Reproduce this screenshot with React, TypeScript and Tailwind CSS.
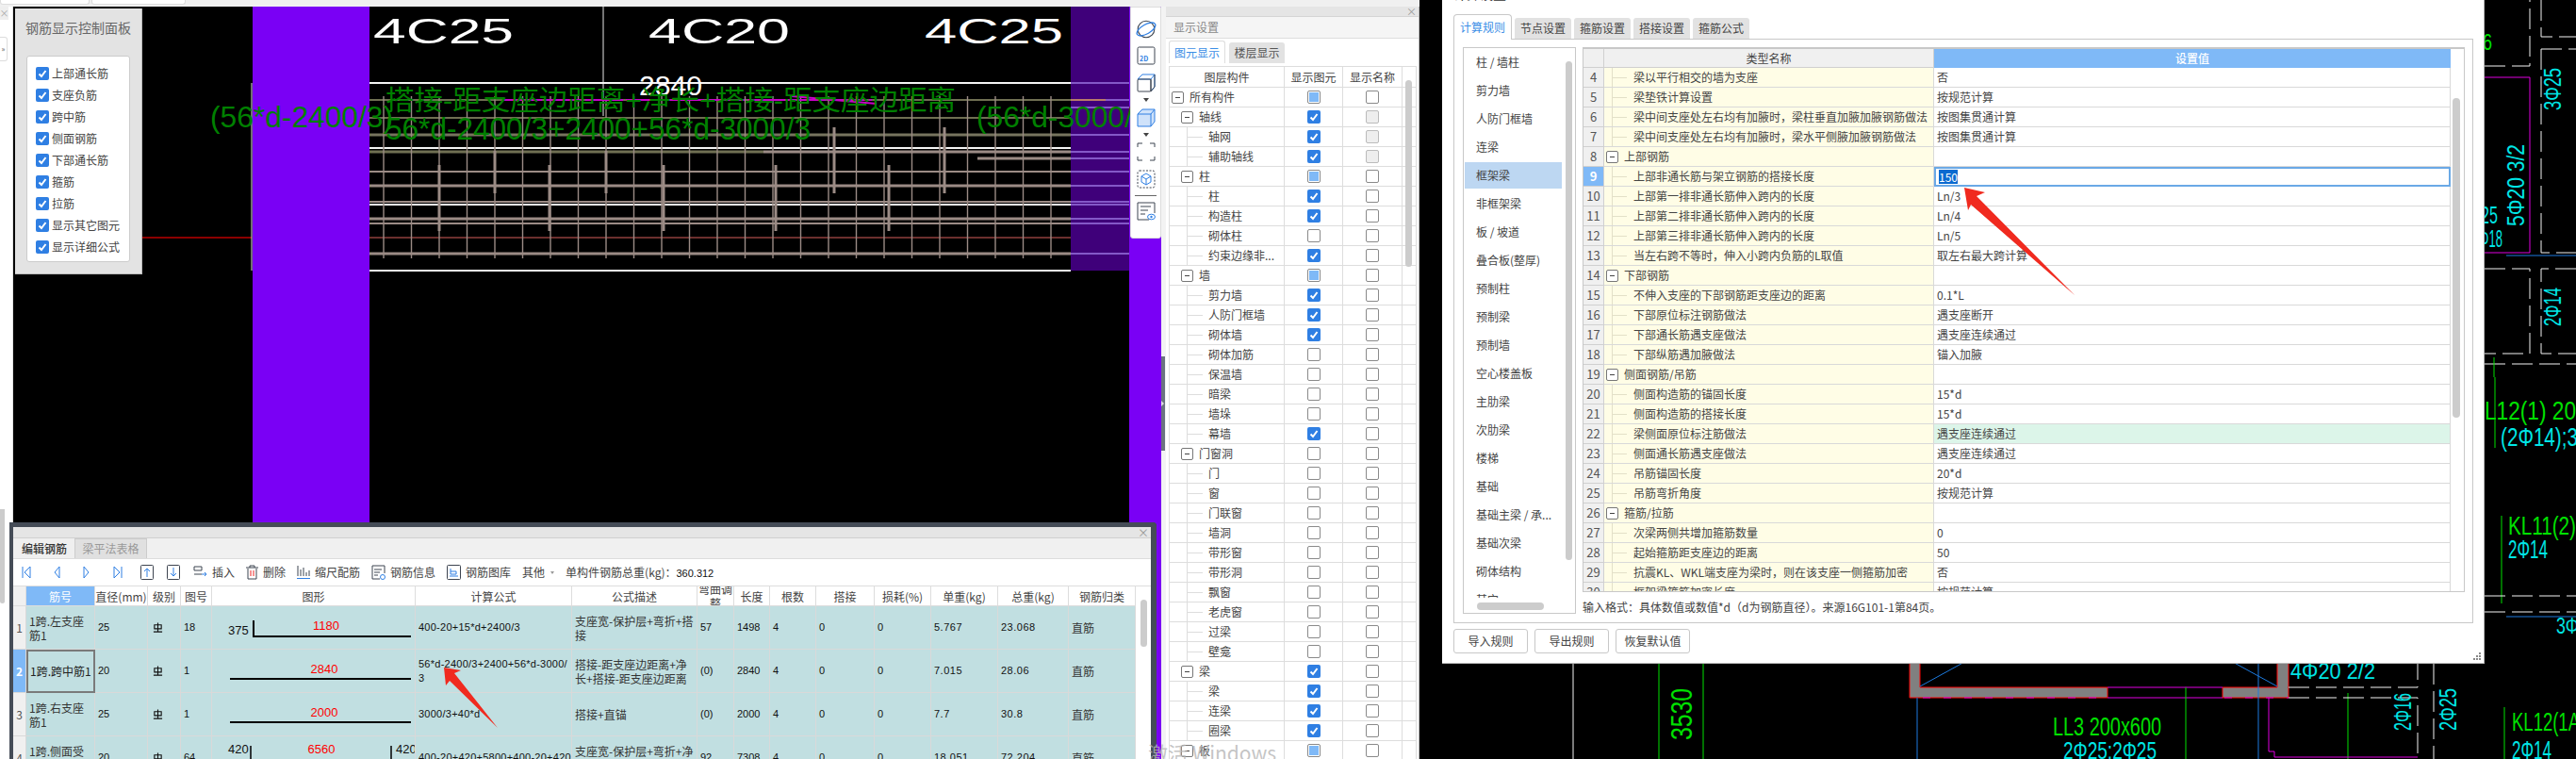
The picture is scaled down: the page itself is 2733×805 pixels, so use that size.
import React from "react";

type CT = { x: number; y: number; w: number; size: number; fill: string; rot?: boolean; children: React.ReactNode };
function T({ x, y, w, size, fill, rot, children }: CT) {
  return (
    <text x={x} y={y} fontSize={size} fill={fill} textLength={w} lengthAdjust="spacingAndGlyphs" transform={rot ? `rotate(-90 ${x} ${y})` : undefined}>
      {children}
    </text>
  );
}

const rebars: [number, number, number, string, number][] = [
  [392, 1136, 106, "#6f6f52", 2],
  [392, 1136, 125, "#6f6f52", 2],
  [392, 1136, 143, "#77745e", 3],
  [392, 810, 161, "#6f6f52", 3],
  [810, 1136, 161, "#9b8b85", 3],
  [1037, 1136, 168, "#9b8b85", 3],
  [392, 1136, 182, "#9b8b85", 2],
  [392, 1136, 197, "#9b8b85", 3],
  [392, 1136, 214, "#9b8b85", 2],
  [392, 1136, 232, "#9b8b85", 3],
  [392, 1136, 237, "#9b8b85", 2],
  [392, 1136, 252, "#9b8b85", 1],
  [392, 1136, 269, "#9b8b85", 3],
];
const streaks = [88, 106, 114, 143, 161, 168, 182, 197, 214, 217, 232, 237, 269];
const thick: [number, number, number][] = [
  [466, 175, 245], [583, 175, 245], [525, 160, 205], [643, 160, 205], [704, 175, 245], [823, 175, 245], [885, 135, 205], [943, 175, 245], [1002, 135, 205],
];

function LeftCad() {
  const verticals = Array.from({ length: 25 }, (_, i) => 407 + i * 29.5);
  return (
    <svg viewBox="14 7 1218 798" className="absolute inset-0 h-full w-full font-['Liberation_Sans','Noto_Sans_CJK_SC',sans-serif]">
      <rect x="14" y="7" width="1218" height="798" fill="#000" />
      <rect x="268" y="7" width="124" height="798" fill="#7a00f5" />
      <rect x="1198" y="7" width="34" height="798" fill="#7a00f5" />
      <rect x="1136" y="7" width="62" height="280" fill="#3f007a" />
      <line x1="151" y1="252" x2="267" y2="252" stroke="#8b0000" strokeWidth="2" />
      <line x1="267" y1="88" x2="267" y2="287" stroke="#e0e0e0" strokeWidth="1" />
      <line x1="640" y1="7" x2="640" y2="123" stroke="#e8e8e8" strokeWidth="1" />
      {[88, 157, 217, 287].map((y) => (
        <line key={y} x1="392" y1={y} x2="1136" y2={y} stroke="#f4f4f4" strokeWidth="2" />
      ))}
      {rebars.map(([a, b, y, c, s], i) => (
        <line key={i} x1={a} y1={y} x2={b} y2={y} stroke={c} strokeWidth={s} />
      ))}
      <line x1="392" y1="252" x2="1136" y2="252" stroke="#8b1a1a" strokeWidth="1" />
      {verticals.map((x) => (
        <line key={x} x1={x} y1="102" x2={x} y2="274" stroke="#9b8b85" strokeWidth="1.4" />
      ))}
      {thick.map(([x, a, b]) => (
        <line key={x} x1={x} y1={a} x2={x} y2={b} stroke="#9b8b85" strokeWidth="3" />
      ))}
      {streaks.map((y) => (
        <line key={y} x1="1136" y1={y} x2="1198" y2={y} stroke="#8458c8" strokeWidth="2" />
      ))}
      <line x1="1136" y1="106" x2="1173" y2="106" stroke="#b87a6a" strokeWidth="2" />
      <line x1="535" y1="106" x2="925" y2="106" stroke="#c800c8" strokeWidth="2" strokeDasharray="40 3" />
      <line x1="840" y1="102" x2="930" y2="110" stroke="#c800c8" strokeWidth="2" />
      <T x={396} y={46} w={149} size={37} fill="#fff">4C25</T>
      <T x={688} y={46} w={150} size={37} fill="#fff">4C20</T>
      <T x={981} y={46} w={147} size={37} fill="#fff">4C25</T>
      <T x={678} y={101} w={67} size={29} fill="#fff">2840</T>
      <T x={409} y={117} w={605} size={29} fill="#008000">搭接-距支座边距离+净长+搭接-距支座边距离</T>
      <T x={409} y={148} w={451} size={34} fill="#008000">56*d-2400/3+2400+56*d-3000/3</T>
      <T x={223} y={135} w={194} size={31} fill="#008000">(56*d-2400/3)</T>
      <T x={1036} y={135} w={194} size={31} fill="#008000">(56*d-3000/3)</T>
    </svg>
  );
}

function Check({ k }: { k: "e" | "c" | "p" | "d" }) {
  if (k === "c")
    return (
      <span className="flex h-[14px] w-[14px] items-center justify-center rounded-[2px] bg-[#2f7fe3]">
        <svg viewBox="0 0 14 14" className="h-[14px] w-[14px]">
          <path d="M3.5 7.5 L6 10 L10.5 4" fill="none" stroke="#fff" strokeWidth="2" />
        </svg>
      </span>
    );
  if (k === "p")
    return (
      <span className="flex h-[14px] w-[14px] items-center justify-center rounded-[2px] border border-[#8a8a8a] bg-white">
        <span className="h-[10px] w-[10px] bg-[#7fb9f7]" />
      </span>
    );
  if (k === "d") return <span className="h-[14px] w-[14px] rounded-[2px] border border-[#bbb] bg-[#eee]" />;
  return <span className="h-[14px] w-[14px] rounded-[2px] border border-[#8a8a8a] bg-white" />;
}

const controls = ["上部通长筋", "支座负筋", "跨中筋", "侧面钢筋", "下部通长筋", "箍筋", "拉筋", "显示其它图元", "显示详细公式"];

function ControlPanel() {
  return (
    <div className="absolute left-[2px] top-[2px] flex h-[282px] w-[135px] flex-col items-center border-b border-r border-[#bbb] bg-[#e3e3e3]">
      <div className="mt-[10px] h-[20px] text-[14px] leading-[20px] text-[#666]">钢筋显示控制面板</div>
      <div className="mt-[20px] flex h-[219px] w-[110px] flex-col rounded-[3px] border border-[#ccc] bg-white pl-[9px] pt-[6px]">
        {controls.map((c) => (
          <div key={c} className="flex h-[23px] items-center gap-[3px] text-[#444]">
            <Check k="c" />
            <span>{c}</span>
          </div>
        ))}
      </div>
    </div>
  );
}

function ToolBar() {
  const s = "#3d4450";
  const b = "#2f7fe3";
  return (
    <div className="absolute right-0 top-0 flex h-[246px] w-[33px] flex-col items-center rounded-b-[3px] border border-[#ddd] bg-white pt-[12px]">
      <svg viewBox="0 0 20 20" className="h-[22px] w-[22px]">
        <circle cx="10" cy="10" r="8" fill="none" stroke={s} strokeWidth="1" />
        <ellipse cx="10" cy="10" rx="10" ry="4.5" transform="rotate(-30 10 10)" fill="none" stroke={b} strokeWidth="1.2" />
      </svg>
      <svg viewBox="0 0 20 20" className="mt-[7px] h-[20px] w-[20px]">
        <rect x="1" y="1" width="18" height="18" rx="1.5" fill="none" stroke={s} />
        <text x="3" y="16" fontSize="7" fontWeight="700" fill={b}>2D</text>
      </svg>
      <svg viewBox="0 0 20 20" className="mt-[9px] h-[20px] w-[20px]">
        <path d="M1 6 L6 1 H19 V14 L15 19" fill="none" stroke={b} />
        <path d="M1 6 H15 L19 1" fill="none" stroke={b} />
        <rect x="1" y="6" width="14" height="13" rx="1" fill="none" stroke={s} />
        <path d="M15 6 V19 L19 14 V1" fill="none" stroke={s} />
      </svg>
      <div className="mt-[6px] h-0 w-0 border-x-[3px] border-t-[4px] border-x-transparent border-t-[#444]" />
      <svg viewBox="0 0 20 20" className="mt-[7px] h-[20px] w-[20px]">
        <path d="M1 6 L6 1 H19 V14 L15 19 H1 Z" fill="#cfe2fa" stroke={b} />
        <path d="M1 6 H15 V19 M15 6 L19 1" fill="none" stroke={b} />
      </svg>
      <div className="mt-[6px] h-0 w-0 border-x-[3px] border-t-[4px] border-x-transparent border-t-[#444]" />
      <svg viewBox="0 0 20 20" className="mt-[6px] h-[20px] w-[20px]">
        <path d="M1 5 V1 H6 M14 1 H19 V5 M19 15 V19 H14 M6 19 H1 V15" fill="none" stroke={s} />
      </svg>
      <svg viewBox="0 0 20 20" className="mt-[9px] h-[20px] w-[20px]">
        <rect x="1" y="1" width="18" height="18" rx="2" fill="none" stroke={s} strokeDasharray="2 1.5" />
        <path d="M10 4 L15 7 V13 L10 16 L5 13 V7 Z M5 7 L10 10 L15 7 M10 10 V16" fill="none" stroke={b} />
      </svg>
      <div className="mt-[7px] h-px w-[23px] bg-[#666]" />
      <svg viewBox="0 0 20 20" className="mt-[6px] h-[20px] w-[20px]">
        <path d="M13 19 H1 V1 H19 V12" fill="none" stroke={s} />
        <path d="M4 5 H15 M4 9 H12 M4 13 H9" stroke={s} />
        <ellipse cx="15.5" cy="16" rx="4" ry="2.8" fill="none" stroke={b} />
        <circle cx="15.5" cy="16" r="1.2" fill={b} />
      </svg>
    </div>
  );
}

const layers: [number, string, "e" | "c" | "p", ("e" | "d")?][] = [
  [0, "所有构件", "p"], [1, "轴线", "c", "d"], [2, "轴网", "c", "d"], [2, "辅助轴线", "c", "d"], [1, "柱", "p"], [2, "柱", "c"], [2, "构造柱", "c"], [2, "砌体柱", "e"],
  [2, "约束边缘非...", "c"], [1, "墙", "p"], [2, "剪力墙", "c"], [2, "人防门框墙", "c"], [2, "砌体墙", "c"], [2, "砌体加筋", "e"], [2, "保温墙", "e"], [2, "暗梁", "e"],
  [2, "墙垛", "e"], [2, "幕墙", "c"], [1, "门窗洞", "e"], [2, "门", "e"], [2, "窗", "e"], [2, "门联窗", "e"], [2, "墙洞", "e"], [2, "带形窗", "e"], [2, "带形洞", "e"],
  [2, "飘窗", "e"], [2, "老虎窗", "e"], [2, "过梁", "e"], [2, "壁龛", "e"], [1, "梁", "c"], [2, "梁", "c"], [2, "连梁", "c"], [2, "圈梁", "c"], [1, "板", "p"],
];

function Minus() {
  return (
    <span className="flex h-[13px] w-[13px] shrink-0 items-center justify-center rounded-[2px] border border-[#777] bg-white">
      <span className="h-px w-[5px] bg-[#444]" />
    </span>
  );
}

function DisplayPanel() {
  return (
    <div className="relative flex h-full w-[269px] flex-col overflow-hidden border-r border-[#bbb] bg-white">
      <div className="flex h-[11px] shrink-0 items-center justify-end border-b border-[#d5d5d5] bg-[#e5e5e5] pr-[2px] text-[11px] leading-none text-[#999]">×</div>
      <div className="flex h-[23px] shrink-0 items-center border-b border-[#ddd] bg-[#f5f5f5] pl-[8px] text-[#888]">显示设置</div>
      <div className="flex h-[26px] shrink-0 items-end gap-[4px] pl-[3px]">
        <div className="flex h-[24px] w-[60px] items-center justify-center rounded-t-[3px] border border-b-0 border-[#ddd] text-[#3a8ee6]">图元显示</div>
        <div className="flex h-[22px] w-[59px] items-center justify-center rounded-t-[3px] bg-[#e2e2e2] text-[#555]">楼层显示</div>
      </div>
      <div className="ml-[3px] mt-[3px] w-[263px] border-l border-r border-t border-[#ddd]">
        <div className="grid h-[22px] grid-cols-[122px_62px_63px] border-b border-[#ddd] text-center leading-[21px] text-[#444]">
          <div className="border-r border-[#ddd]">图层构件</div>
          <div className="border-r border-[#ddd]">显示图元</div>
          <div className="border-r border-[#ddd]">显示名称</div>
        </div>
        {layers.map(([lv, name, a, b], i) => (
          <div key={i} className="grid h-[21px] grid-cols-[122px_62px_63px] border-b border-[#ddd] text-[#444]">
            <div className="flex h-full items-center border-r border-[#ddd]">
              {lv === 0 && (
                <span className="flex items-center gap-[6px] pl-[2px]">
                  <Minus />
                  {name}
                </span>
              )}
              {lv === 1 && (
                <span className="flex items-center gap-[6px] pl-[12px]">
                  <Minus />
                  {name}
                </span>
              )}
              {lv === 2 && (
                <>
                  <span className="ml-[18px] flex h-full w-[17px] items-center border-l border-[#ddd]">
                    <span className="w-full border-t border-[#ddd]" />
                  </span>
                  <span className="ml-[6px] whitespace-nowrap">{name}</span>
                </>
              )}
            </div>
            <div className="flex items-center justify-center border-r border-[#ddd]">
              <Check k={a} />
            </div>
            <div className="flex items-center justify-center border-r border-[#ddd]">
              <Check k={b ?? "e"} />
            </div>
          </div>
        ))}
      </div>
      <div className="absolute left-[254px] top-[78px] h-[198px] w-[7px] rounded-full bg-[#ccc]" />
    </div>
  );
}

const COLS = "grid-cols-[14px_73px_56px_35px_33px_216px_166px_133px_39px_38px_49px_62px_60px_71px_75px_71px]";
const heads = ["", "筋号", "直径(mm)", "级别", "图号", "图形", "计算公式", "公式描述", "弯曲调整", "长度", "根数", "搭接", "损耗(%)", "单重(kg)", "总重(kg)", "钢筋归类"];
const rows = [
  { n: "1跨.左支座筋1", d: "25", t: "18", f: "400-20+15*d+2400/3", m: "支座宽-保护层+弯折+搭接", w: "57", l: "1498", u: "5.767", tw: "23.068" },
  { n: "1跨.跨中筋1", d: "20", t: "1", f: "56*d-2400/3+2400+56*d-3000/3", m: "搭接-距支座边距离+净长+搭接-距支座边距离", w: "(0)", l: "2840", u: "7.015", tw: "28.06" },
  { n: "1跨.右支座筋1", d: "25", t: "1", f: "3000/3+40*d", m: "搭接+直锚", w: "(0)", l: "2000", u: "7.7", tw: "30.8" },
  { n: "1跨.侧面受扭筋1", d: "20", t: "64", f: "400-20+420+5800+400-20+420", m: "支座宽-保护层+弯折+净长+支座宽-保护层+弯折", w: "92", l: "7308", u: "18.051", tw: "72.204" },
];

function Shape({ i }: { i: number }) {
  const labels = ["1180", "2840", "2000", "6560"];
  return (
    <svg viewBox="0 0 216 46" className="h-[46px] w-[216px] font-['Liberation_Sans',sans-serif]">
      {i === 0 && (
        <>
          <text x="17" y="30" fontSize="13" fill="#111">375</text>
          <path d="M44 15 V32 H211" fill="none" stroke="#000" strokeWidth="2" />
        </>
      )}
      {(i === 1 || i === 2) && <line x1="19" y1="31" x2="211" y2="31" stroke="#000" strokeWidth="2" />}
      {i === 3 && (
        <>
          <text x="17" y="18" fontSize="13" fill="#111">420</text>
          <path d="M41 10 V32 H190 V10" fill="none" stroke="#000" strokeWidth="1.5" />
          <text x="195" y="18" fontSize="13" fill="#111">420</text>
        </>
      )}
      <text x={i === 0 ? 121 : i === 3 ? 116 : 119} y={i === 3 ? 18 : 25} fontSize="13" fill="#f00" textAnchor="middle">{labels[i]}</text>
    </svg>
  );
}

function Grade() {
  return (
    <svg viewBox="0 0 12 12" className="h-[11px] w-[11px]">
      <path d="M2 3 H10 V7.5 H2 Z M6 0.5 V11 M1 11 H11" fill="none" stroke="#111" strokeWidth="1.2" />
    </svg>
  );
}

function Tool({ label, children }: { label: string; children: React.ReactNode }) {
  return (
    <div className="flex items-center gap-[5px] text-[#444]">
      {children}
      <span>{label}</span>
    </div>
  );
}

function Dialog() {
  const bl = "#2f7fe3";
  const dk = "#3d4450";
  const num = "font-['Liberation_Sans',sans-serif] text-[11px] text-[#111]";
  return (
    <div className="absolute left-[10px] top-[554px] flex h-[260px] w-[1217px] flex-col overflow-hidden rounded-tr-[4px] border-b-0 border-l-[4px] border-r-[6px] border-t-[5px] border-[#454c57] bg-white">
      <div className="flex h-[12px] shrink-0 items-center justify-end border-b border-[#d0d0d0] bg-[#e5e5e5] pr-[2px] text-[12px] leading-none text-[#999]">×</div>
      <div className="flex h-[22px] shrink-0 items-stretch border-b border-[#ddd] bg-[#f0f0f0] pl-px">
        <div className="flex w-[64px] items-center justify-center bg-[#efefef] font-medium text-[#333]">编辑钢筋</div>
        <div className="flex w-[77px] items-center justify-center border border-b-0 border-[#ccc] bg-[#e0e0e0] text-[#999]">梁平法表格</div>
      </div>
      <div className="flex h-[29px] shrink-0 items-center border-b border-[#ddd] bg-white pl-[9px]">
        <svg width="10" height="14" viewBox="0 0 10 14" className="mr-[24px]"><path d="M1 1 V13 M9 1 V13 L3 7 Z" fill="none" stroke={bl} /></svg>
        <svg width="7" height="14" viewBox="0 0 7 14" className="mr-[24px]"><path d="M6 1 V13 L1 7 Z" fill="none" stroke={bl} /></svg>
        <svg width="7" height="14" viewBox="0 0 7 14" className="mr-[25px]"><path d="M1 1 V13 L6 7 Z" fill="none" stroke={bl} /></svg>
        <svg width="10" height="14" viewBox="0 0 10 14" className="mr-[19px]"><path d="M1 1 V13 L7 7 Z M9 1 V13" fill="none" stroke={bl} /></svg>
        <svg width="14" height="16" viewBox="0 0 14 16" className="mr-[14px]"><rect x=".5" y=".5" width="13" height="15" rx="1" fill="none" stroke={dk} /><path d="M7 13 V4 M4 7 L7 4 L10 7" fill="none" stroke={bl} /></svg>
        <svg width="14" height="16" viewBox="0 0 14 16" className="mr-[14px]"><rect x=".5" y=".5" width="13" height="15" rx="1" fill="none" stroke={dk} /><path d="M7 3 V12 M4 9 L7 12 L10 9" fill="none" stroke={bl} /></svg>
        <div className="flex items-center gap-[12px]">
          <Tool label="插入">
            <svg width="15" height="14" viewBox="0 0 15 14"><path d="M1 1 H9 V5 H1 Z M1 9 H9" fill="none" stroke={dk} /><path d="M9 9 H14 M12 7 L14 9 L12 11" fill="none" stroke={bl} /></svg>
          </Tool>
          <Tool label="删除">
            <svg width="13" height="16" viewBox="0 0 13 16"><path d="M2 4 V15 H11 V4 M0 3 H13 M4 3 V1 H9 V3" fill="none" stroke={dk} /><path d="M5 6 V12 M8 6 V12" stroke="#e22" /></svg>
          </Tool>
          <Tool label="缩尺配筋">
            <svg width="14" height="16" viewBox="0 0 14 16"><path d="M1 1 V12 M4 5 V12 M7 3 V12 M10 8 V12 M13 6 V12" stroke={dk} /><path d="M0 14.5 H14" stroke={bl} /></svg>
          </Tool>
          <Tool label="钢筋信息">
            <svg width="15" height="16" viewBox="0 0 15 16"><path d="M9 15 H1 V1 H14 V9" fill="none" stroke={dk} /><path d="M3 5 H11 M3 8 H9 M3 11 H7" stroke={dk} /><circle cx="12" cy="13" r="2.5" fill="none" stroke={bl} /></svg>
          </Tool>
          <Tool label="钢筋图库">
            <svg width="15" height="16" viewBox="0 0 15 16"><rect x=".5" y=".5" width="14" height="15" rx="1" fill="none" stroke={dk} /><path d="M4 4 V10 H10 V7 H4 M3 12 H12" fill="none" stroke={bl} /></svg>
          </Tool>
          <div className="flex items-center gap-[6px] text-[#444]">
            <span>其他</span>
            <span className="h-0 w-0 border-x-[2px] border-t-[3px] border-x-transparent border-t-[#999]" />
          </div>
          <span className="whitespace-nowrap text-[#444]">
            单构件钢筋总重(kg)：<span className={num}>360.312</span>
          </span>
        </div>
      </div>
      <div className={`grid h-[21px] w-[1191px] shrink-0 border-b border-[#ddd] bg-white pl-0 text-center text-[#444] ${COLS}`}>
        {heads.map((h, i) => (
          <div key={i} className={`flex items-center justify-center overflow-hidden border-r border-[#ddd] leading-[15px] ${i === 0 ? "bg-[#f0f0f0]" : ""} ${i === 1 ? "bg-[#7fb9f7] text-white" : ""}`}>
            {h}
          </div>
        ))}
      </div>
      {rows.map((r, i) => {
        const cell = "flex h-[46px] items-center border-b border-r border-[#d9d9d9] bg-[#c1dfe1] pl-[3px]";
        return (
          <div key={i} className={`grid w-[1191px] shrink-0 ${COLS}`}>
            <div className={`flex h-[46px] items-center justify-center border-b border-r border-[#d9d9d9] ${i === 1 ? "bg-[#7fb9f7] font-bold text-white" : "bg-[#f0f0f0] text-[#555]"}`}>{i + 1}</div>
            <div className={i === 1 ? "flex h-[46px] items-center border-2 border-[#7a7a7a] bg-[#c1dfe1] pl-[2px] text-[#222]" : `${cell} leading-[15px] text-[#333]`}>
              <span className="whitespace-pre-wrap break-all">{r.n}</span>
            </div>
            <div className={`${cell} ${num}`}>{r.d}</div>
            <div className={`${cell} pl-[5px]`}><Grade /></div>
            <div className={`${cell} ${num}`}>{r.t}</div>
            <div className="h-[46px] overflow-hidden border-b border-r border-[#d9d9d9] bg-[#c1dfe1]"><Shape i={i} /></div>
            <div className={`${cell} leading-[15px] ${num}`}>
              <span className="break-all tracking-[0.25px]">{r.f}</span>
            </div>
            <div className={`${cell} leading-[15px] text-[#333]`}>{r.m}</div>
            <div className={`${cell} ${num}`}>{r.w}</div>
            <div className={`${cell} ${num}`}>{r.l}</div>
            <div className={`${cell} ${num}`}>4</div>
            <div className={`${cell} ${num}`}>0</div>
            <div className={`${cell} ${num}`}>0</div>
            <div className={`${cell} ${num} tracking-[0.5px]`}>{r.u}</div>
            <div className={`${cell} ${num} tracking-[0.5px]`}>{r.tw}</div>
            <div className={`${cell} text-[#333]`}>直筋</div>
          </div>
        );
      })}
      <div className="absolute left-[1196px] top-[77px] h-[50px] w-[7px] rounded-full bg-[#ccc]" />
    </div>
  );
}

function LeftApp() {
  return (
    <div className="relative flex h-full w-[1506px] shrink-0 flex-col bg-[#f0f0f0]">
      <div className="flex h-[7px] shrink-0 items-start gap-[2px]">
        <div className="h-[5px] w-[95px] rounded-b-[3px] border border-t-0 border-[#ddd] bg-white" />
        <div className="h-[5px] w-[100px] rounded-b-[3px] border border-t-0 border-[#ddd] bg-white" />
      </div>
      <div className="flex h-[798px] min-h-0">
        <div className="flex w-[14px] shrink-0 flex-col border-r border-[#e0e0e0] bg-white">
          <div className="flex h-[14px] w-[9px] items-center justify-center bg-[#eee] text-[10px] leading-none text-[#aaa]">×</div>
          <div className="mt-[18px] flex h-[26px] w-[8px] items-center justify-center rounded-r-[3px] border border-l-0 border-[#ddd] text-[8px] leading-none text-[#555]">»</div>
        </div>
        <div className="relative w-[1218px] shrink-0 overflow-hidden">
          <LeftCad />
          <ControlPanel />
          <ToolBar />
        </div>
        <div className="flex w-[5px] shrink-0 flex-col bg-[#f3f3f3]">
          <div className="mt-[371px] flex h-[100px] w-[4px] items-center bg-[#6b7280]">
            <span className="h-0 w-0 border-y-[3px] border-l-[3px] border-y-transparent border-l-[#ddd]" />
          </div>
        </div>
        <DisplayPanel />
      </div>
      <Dialog />
      <div className="absolute left-0 top-[540px] h-[100px] w-[5px] rounded-b-[3px] bg-[#ccc]" />
      <svg viewBox="10 554 1217 251" className="pointer-events-none absolute left-[10px] top-[554px] h-[251px] w-[1217px]">
        <polygon points="471,708 489,711 482,714 528,772 477,722 473,727" fill="#f02a1f" />
      </svg>
    </div>
  );
}

function RightCad() {
  const c = "#00e5e5";
  const g = "#00e000";
  const m = "#e000e0";
  const b = "#1c7be0";
  const w = "#f4f4f4";
  const dash = "22 7";
  return (
    <svg viewBox="1506 0 1227 805" className="absolute inset-0 h-full w-full font-['Liberation_Sans',sans-serif]">
      <rect x="1506" y="0" width="1227" height="805" fill="#000" />
      <line x1="1669" y1="700" x2="1669" y2="805" stroke={w} />
      <line x1="1760" y1="700" x2="1760" y2="805" stroke={g} />
      <line x1="1807" y1="700" x2="1807" y2="805" stroke={g} />
      <T x={1795} y={785} w={55} size={32} fill={g} rot>3530</T>
      <path d="M2026 700 V740 H2236 V729 H2037 V700 Z" fill="#808080" stroke="#f00" />
      <path d="M2428 700 V740 H2358 V729 H2416 V700 Z" fill="#808080" stroke="#f00" />
      <path d="M2236 729 H2358 M2236 740 H2358" stroke={m} />
      <path d="M2040 740 H2236 M2360 740 H2428" stroke={m} strokeDasharray="8 14" />
      <path d="M2037 728 L2088 700 M2416 728 L2365 700" stroke={b} />
      <path d="M2034 740 V805 M2396 700 V805" stroke={b} />
      <path d="M2319 729 V805 M2491 735 V805" stroke={g} />
      <path d="M2407 740 V797 H2413 V803 H2565" fill="none" stroke={m} />
      <T x={2178} y={780} w={115} size={28} fill={g}>LL3 200x600</T>
      <T x={2189} y={805} w={99} size={26} fill={c}>2Φ25;2Φ25</T>
      <T x={2430} y={720} w={90} size={24} fill={c}>4Φ20 2/2</T>
      <path d="M2428 729 H2565 V704 M2428 740 H2565 V805 M2582 704 V805" fill="none" stroke={w} strokeDasharray={dash} />
      <T x={2558} y={775} w={40} size={26} fill={c} rot>2Φ16</T>
      <T x={2606} y={775} w={45} size={26} fill={c} rot>2Φ25</T>
      <T x={2636} y={445} w={97} size={28} fill={g}>L12(1) 20</T>
      <T x={2653} y={473} w={82} size={28} fill={c}>(2Φ14);3</T>
      <line x1="2647" y1="400" x2="2647" y2="475" stroke={g} />
      <T x={2661} y={567} w={72} size={28} fill={g}>KL11(2)</T>
      <T x={2661} y={592} w={42} size={28} fill={c}>2Φ14</T>
      <line x1="2654" y1="547" x2="2654" y2="640" stroke={g} />
      <path d="M2636 632 H2733 M2636 649 H2733" stroke={w} strokeDasharray={dash} />
      <line x1="2659" y1="654" x2="2733" y2="654" stroke={b} />
      <T x={2712} y={672} w={24} size={24} fill={c}>3Φ</T>
      <T x={2665} y={775} w={72} size={28} fill={g}>KL12(1A</T>
      <T x={2665} y={805} w={42} size={28} fill={c}>2Φ14</T>
      <line x1="2657" y1="750" x2="2657" y2="805" stroke={g} />
      <T x={2634} y={53} w={10} size={24} fill={g}>6</T>
      <path d="M2636 70 H2684 V0 M2696 0 V39 H2733" fill="none" stroke={w} strokeDasharray={dash} />
      <path d="M2696 52 H2733 M2696 52 V268 H2733" fill="none" stroke={w} strokeDasharray={dash} />
      <path d="M2636 82 H2684 V268 H2636" fill="none" stroke={m} />
      <path d="M2659 271 H2733" stroke={b} />
      <path d="M2636 285 H2684 V375 H2636 M2733 285 H2696 V375 H2733 M2636 386 H2733" fill="none" stroke={w} strokeDasharray={dash} />
      <line x1="2646" y1="379" x2="2646" y2="400" stroke={g} />
      <T x={2717} y={117} w={45} size={26} fill={c} rot>3Φ25</T>
      <T x={2678} y={240} w={87} size={26} fill={c} rot>5Φ20 3/2</T>
      <T x={2717} y={346} w={41} size={26} fill={c} rot>2Φ14</T>
      <T x={2632} y={237} w={18} size={26} fill={c}>25</T>
      <T x={2630} y={262} w={25} size={26} fill={c}>Φ18</T>
    </svg>
  );
}

const sideItems = ["柱 / 墙柱", "剪力墙", "人防门框墙", "连梁", "框架梁", "非框架梁", "板 / 坡道", "叠合板(整厚)", "预制柱", "预制梁", "预制墙", "空心楼盖板", "主肋梁", "次肋梁", "楼梯", "基础", "基础主梁 / 承...", "基础次梁", "砌体结构", "其它"];

type Rule = { n: number; g?: boolean; t: string; v?: string };
const ruleRows: Rule[] = [
  { n: 4, t: "梁以平行相交的墙为支座", v: "否" },
  { n: 5, t: "梁垫铁计算设置", v: "按规范计算" },
  { n: 6, t: "梁中间支座处左右均有加腋时，梁柱垂直加腋加腋钢筋做法", v: "按图集贯通计算" },
  { n: 7, t: "梁中间支座处左右均有加腋时，梁水平侧腋加腋钢筋做法", v: "按图集贯通计算" },
  { n: 8, g: true, t: "上部钢筋" },
  { n: 9, t: "上部非通长筋与架立钢筋的搭接长度", v: "150" },
  { n: 10, t: "上部第一排非通长筋伸入跨内的长度", v: "Ln/3" },
  { n: 11, t: "上部第二排非通长筋伸入跨内的长度", v: "Ln/4" },
  { n: 12, t: "上部第三排非通长筋伸入跨内的长度", v: "Ln/5" },
  { n: 13, t: "当左右跨不等时，伸入小跨内负筋的L取值", v: "取左右最大跨计算" },
  { n: 14, g: true, t: "下部钢筋" },
  { n: 15, t: "不伸入支座的下部钢筋距支座边的距离", v: "0.1*L" },
  { n: 16, t: "下部原位标注钢筋做法", v: "遇支座断开" },
  { n: 17, t: "下部通长筋遇支座做法", v: "遇支座连续通过" },
  { n: 18, t: "下部纵筋遇加腋做法", v: "锚入加腋" },
  { n: 19, g: true, t: "侧面钢筋/吊筋" },
  { n: 20, t: "侧面构造筋的锚固长度", v: "15*d" },
  { n: 21, t: "侧面构造筋的搭接长度", v: "15*d" },
  { n: 22, t: "梁侧面原位标注筋做法", v: "遇支座连续通过" },
  { n: 23, t: "侧面通长筋遇支座做法", v: "遇支座连续通过" },
  { n: 24, t: "吊筋锚固长度", v: "20*d" },
  { n: 25, t: "吊筋弯折角度", v: "按规范计算" },
  { n: 26, g: true, t: "箍筋/拉筋" },
  { n: 27, t: "次梁两侧共增加箍筋数量", v: "0" },
  { n: 28, t: "起始箍筋距支座边的距离", v: "50" },
  { n: 29, t: "抗震KL、WKL端支座为梁时，则在该支座一侧箍筋加密", v: "否" },
  { n: 30, t: "框架梁箍筋加密长度", v: "按规范计算" },
];

function RuleDialog() {
  return (
    <div className="relative flex h-[704px] w-[1106px] shrink-0 flex-col border-b border-r border-[#bbb] bg-white pl-[12px]">
      <div className="h-[15px] shrink-0 overflow-hidden">
        <div className="-mt-[17px] text-[14px] leading-[20px] text-[#333]">计算设置</div>
      </div>
      <div className="flex h-[26px] shrink-0 items-end gap-[3px]">
        <div className="z-10 -mb-px flex h-[27px] w-[62px] items-center justify-center rounded-t-[4px] border border-b-0 border-[#c8c8c8] bg-white text-[#3a8ee6]">计算规则</div>
        {["节点设置", "箍筋设置", "搭接设置", "箍筋公式"].map((t) => (
          <div key={t} className="flex h-[22px] w-[60px] items-center justify-center rounded-t-[3px] bg-[#e2e2e2] text-[#444]">{t}</div>
        ))}
      </div>
      <div className="flex h-[620px] w-[1082px] shrink-0 gap-[7px] border border-[#c8c8c8] pl-[9px] pt-[8px]">
        <div className="relative h-[601px] w-[120px] shrink-0 overflow-hidden border border-[#c8c8c8] pt-px">
          <div className="h-[582px] overflow-hidden">
            {sideItems.map((s, i) => (
              <div key={s} className="h-[30px]">
                <div className={`ml-px flex h-[28px] w-[103px] items-center whitespace-nowrap pl-[12px] text-[#444] ${i === 4 ? "bg-[#bdd7f2]" : ""}`}>{s}</div>
              </div>
            ))}
          </div>
          <div className="absolute left-[108px] top-[14px] h-[529px] w-[7px] rounded-full bg-[#ccc]" />
          <div className="absolute left-[14px] top-[588px] h-[8px] w-[71px] rounded-full bg-[#ccc]" />
        </div>
        <div className="flex min-w-0 flex-col">
          <div className="relative h-[578px] w-[936px] overflow-hidden border-x border-b border-t-2 border-[#c8c8c8]">
            <div className="grid h-[20px] grid-cols-[22px_350px_548px]">
              <div className="border-b border-r border-[#d0d0d0] bg-[#f0f0f0]" />
              <div className="border-b border-r border-[#d0d0d0] bg-[#f0f0f0] text-center leading-[19px] text-[#444]">类型名称</div>
              <div className="bg-[#7fb9f7] text-center font-medium leading-[19px] text-white">设置值</div>
            </div>
            {ruleRows.map((r) => {
              const sel = r.n === 9;
              const green = r.n === 22;
              return (
                <div key={r.n} className="grid h-[21px] grid-cols-[22px_350px_548px]">
                  <div className={`flex items-center justify-center border-b border-r border-[#d0d0d0] text-[13px] ${sel ? "bg-[#7fb9f7] font-bold text-white" : "bg-[#f0f0f0] text-[#555]"}`}>{r.n}</div>
                  <div className="flex items-center border-b border-r border-[#d9d9d9] bg-[#fffde6] text-[#444]">
                    {r.g ? (
                      <span className="flex items-center gap-[6px] pl-[2px]">
                        <Minus />
                        {r.t}
                      </span>
                    ) : (
                      <>
                        <span className="ml-[8px] flex h-full w-[16px] shrink-0 items-center border-l border-[#e3e0c8]">
                          <span className="w-full border-t border-[#e3e0c8]" />
                        </span>
                        <span className="ml-[7px] whitespace-nowrap">{r.t}</span>
                      </>
                    )}
                  </div>
                  <div className={`flex items-center pl-[3px] text-[#444] ${sel ? "border-2 border-[#6aa9e6]" : "border-b border-r border-[#d9d9d9]"} ${green ? "bg-[#dcf5e9]" : "bg-white"}`}>
                    {sel ? <span className="bg-[#0a6ad0] leading-[15px] text-white">{r.v}</span> : r.v}
                  </div>
                </div>
              );
            })}
            <div className="absolute left-[922px] top-[52px] h-[339px] w-[8px] rounded-full bg-[#ccc]" />
          </div>
          <div className="mt-[7px] whitespace-nowrap text-[#444]">输入格式：具体数值或数值*d（d为钢筋直径）。来源16G101-1第84页。</div>
        </div>
      </div>
      <div className="mt-[6px] flex gap-[7px]">
        {["导入规则", "导出规则", "恢复默认值"].map((t) => (
          <div key={t} className="flex h-[26px] w-[79px] items-center justify-center rounded-[3px] border border-[#c8c8c8] bg-white text-[#444]">{t}</div>
        ))}
      </div>
      <svg viewBox="0 0 9 9" className="absolute bottom-[2px] right-[2px] h-[9px] w-[9px]">
        <path d="M6 0h2v2H6z M3 3h2v2H3z M6 3h2v2H6z M0 6h2v2H0z M3 6h2v2H3z M6 6h2v2H6z" fill="#888" />
      </svg>
      <svg viewBox="0 0 140 130" className="pointer-events-none absolute left-[540px] top-[190px] h-[130px] w-[140px]">
        <polygon points="14,9 36,14 27,18 131,123 21,27 18,33" fill="#f02a1f" />
      </svg>
    </div>
  );
}

export default function App() {
  return (
    <div className="relative flex h-[805px] w-[2733px] overflow-hidden bg-black font-['Noto_Sans_CJK_SC','Liberation_Sans',sans-serif] text-[12px] text-[#333]">
      <LeftApp />
      <div className="relative flex-1 pl-[24px]">
        <RightCad />
        <RuleDialog />
      </div>
      <div className="pointer-events-none absolute left-[1218px] top-[786px] whitespace-nowrap text-[21px] leading-[24px] text-[#b5b5b5]/80">激活 Windows</div>
    </div>
  );
}
